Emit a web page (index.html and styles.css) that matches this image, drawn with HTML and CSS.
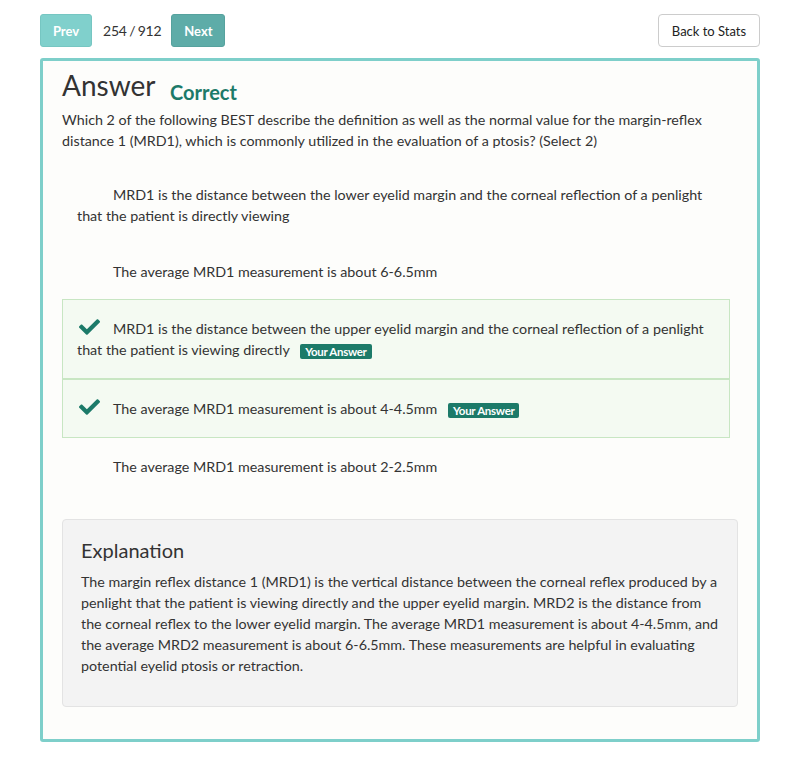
FILE: index.html
```html
<!DOCTYPE html>
<html>
<head>
<meta charset="utf-8">
<link rel="stylesheet" href="styles.css">
</head>
<body>
<div class="page">
  <div class="topbar">
    <div class="nav">
      <button class="btn btn-prev">Prev</button>
      <span class="counter">254 / 912</span>
      <button class="btn btn-next">Next</button>
    </div>
    <button class="btn-back">Back to Stats</button>
  </div>
  <div class="card">
    <h2 class="title">Answer <span class="status">Correct</span></h2>
    <p class="question">Which 2 of the following BEST describe the definition as well as the normal value for the margin-reflex distance 1 (MRD1), which is commonly utilized in the evaluation of a ptosis? (Select 2)</p>
    <div class="options">
      <div class="option"><span class="mark"></span>MRD1 is the distance between the lower eyelid margin and the corneal reflection of a penlight that the patient is directly viewing</div>
      <div class="option"><span class="mark"></span>The average MRD1 measurement is about 6-6.5mm</div>
      <div class="option selected"><span class="mark"><svg class="check" viewBox="0 64 512 384" width="21" height="16"><path d="M173.9 439.4l-166.4-166.4c-10-10-10-26.2 0-36.2l36.2-36.2c10-10 26.2-10 36.2 0L192 312.7 432.1 72.6c10-10 26.2-10 36.2 0l36.2 36.2c10 10 10 26.2 0 36.2l-294.4 294.4c-10 10-26.2 10-36.2 0z"/></svg></span>MRD1 is the distance between the upper eyelid margin and the corneal reflection of a penlight that the patient is viewing directly <span class="badge">Your Answer</span></div>
      <div class="option selected"><span class="mark"><svg class="check" viewBox="0 64 512 384" width="21" height="16"><path d="M173.9 439.4l-166.4-166.4c-10-10-10-26.2 0-36.2l36.2-36.2c10-10 26.2-10 36.2 0L192 312.7 432.1 72.6c10-10 26.2-10 36.2 0l36.2 36.2c10 10 10 26.2 0 36.2l-294.4 294.4c-10 10-26.2 10-36.2 0z"/></svg></span>The average MRD1 measurement is about 4-4.5mm <span class="badge">Your Answer</span></div>
      <div class="option"><span class="mark"></span>The average MRD1 measurement is about 2-2.5mm</div>
    </div>
    <div class="explanation">
      <h3 class="exp-title">Explanation</h3>
      <p class="exp-text">The margin reflex distance 1 (MRD1) is the vertical distance between the corneal reflex produced by a penlight that the patient is viewing directly and the upper eyelid margin. MRD2 is the distance from the corneal reflex to the lower eyelid margin. The average MRD1 measurement is about 4-4.5mm, and the average MRD2 measurement is about 6-6.5mm. These measurements are helpful in evaluating potential eyelid ptosis or retraction.</p>
    </div>
  </div>
</div>
</body>
</html>
```

FILE: styles.css
```css
* { box-sizing: border-box; }
html, body { margin: 0; padding: 0; background: #ffffff; }
body {
  font-family: Lato, "Open Sans", sans-serif;
  color: #333333;
  font-size: 14.3px;
  line-height: 21px;
}
.page { padding: 14px 40px 24px; }
.topbar {
  display: flex;
  justify-content: space-between;
  align-items: center;
  height: 33px;
}
.nav { display: flex; align-items: center; }
.btn {
  height: 33px;
  border: 1px solid transparent;
  border-radius: 3px;
  color: #ffffff;
  font-family: inherit;
  font-weight: 700;
  font-size: 13px;
  padding: 0;
  cursor: pointer;
}
.btn-prev { background: #80d0cc; border-color: #76c6c2; width: 52px; }
.btn-next { background: #5eaca8; border-color: #56a29e; width: 54px; }
.counter { margin: 0 10px 0 11px; font-size: 14px; letter-spacing: -0.2px; word-spacing: -1px; color: #333; }
.btn-back {
  height: 33px;
  width: 102px;
  background: #ffffff;
  border: 1px solid #cccccc;
  border-radius: 4px;
  font-family: inherit;
  font-size: 13px;
  color: #222222;
  padding: 0;
}
.card {
  margin-top: 11px;
  border: 3px solid #7ecfca;
  border-radius: 3px;
  background: #fdfdfb;
  padding: 7px 19px 32px;
}
.title {
  margin: 0;
  font-size: 28px;
  line-height: 34px;
  font-weight: 400;
  color: #333333;
}
.status {
  font-size: 20px;
  font-weight: 700;
  color: #1c7a69;
  margin-left: 8px;
  vertical-align: -4px;
}
.question { margin: 0 0 15px; }
.options { margin-right: 8px; }
.option {
  padding: 17.5px 15px;
}
.mark {
  display: inline-block;
  width: 36px;
  vertical-align: top;
}
.check {
  fill: #1c7a69;
  margin-left: 2px;
  vertical-align: -1px;
}
.option.selected {
  padding: 18px 14px;
  background: #f4faf2;
  border: 1px solid #c8e6c3;
}
.badge {
  display: inline-block;
  background: #1c7a69;
  color: #ffffff;
  font-size: 11.5px;
  font-weight: 700;
  line-height: 15px;
  padding: 0 5px;
  letter-spacing: -0.3px;
  border-radius: 2px;
  margin-left: 7px;
  vertical-align: -1px;
}
.explanation {
  margin-top: 25px;
  background: #f3f3f3;
  border: 1px solid #e3e3e3;
  border-radius: 4px;
  padding: 19px 18px 20px;
}
.exp-title {
  margin: 0 0 10px;
  font-size: 20px;
  line-height: 22px;
  font-weight: 400;
  color: #333333;
}
.exp-text { margin: 0 0 10px; }
```
